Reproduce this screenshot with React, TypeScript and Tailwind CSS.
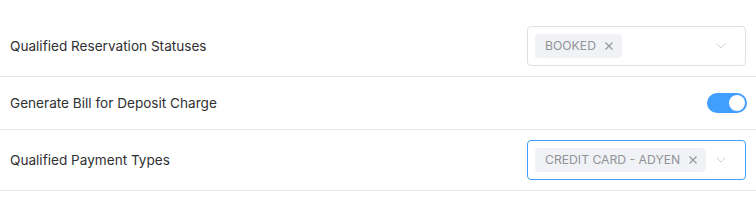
import { ChevronDown } from "lucide-react";

function Tag({ label }: { label: string }) {
  return (
    <span className="flex h-[24px] shrink-0 items-center gap-[9px] whitespace-nowrap rounded-[4px] bg-[#f0f2f5] pl-[10px] pr-[9px] text-[12.2px] text-[#909399]">
      {label}
      <svg width="8" height="8" viewBox="0 0 8 8" className="text-[#909399]">
        <path d="M0.5 0.5 L7.5 7.5 M7.5 0.5 L0.5 7.5" stroke="currentColor" strokeWidth="1.1" />
      </svg>
    </span>
  );
}

function MultiSelect({ tag, focused }: { tag: string; focused?: boolean }) {
  return (
    <div
      className={`flex h-[40px] w-[219px] items-center justify-between rounded-[4px] border bg-white pl-[7px] pr-[16px] ${
        focused ? "border-[#409eff]" : "border-[#dcdfe6]"
      }`}
    >
      <Tag label={tag} />
      <ChevronDown size={16} strokeWidth={1.2} className="shrink-0 text-[#c0c4cc]" />
    </div>
  );
}

function Toggle() {
  return (
    <div className="flex h-[20px] w-[40px] items-center justify-end rounded-full bg-[#409eff] pr-[2px]">
      <span className="h-[16px] w-[16px] rounded-full bg-white" />
    </div>
  );
}

export default function App() {
  return (
    <div
      className="w-[756px] bg-white pt-[16px] text-[13.6px] text-[#303133]"
      style={{ fontFamily: "Inter, 'Noto Sans', sans-serif" }}
    >
      <div className="flex items-center justify-between border-b border-[#e4e7ed] py-[10px] pl-[10px] pr-[10px]">
        <span>Qualified Reservation Statuses</span>
        <MultiSelect tag="BOOKED" />
      </div>
      <div className="flex items-center justify-between border-b border-[#e4e7ed] py-[16px] pl-[10px] pr-[9px]">
        <span>Generate Bill for Deposit Charge</span>
        <Toggle />
      </div>
      <div className="flex items-center justify-between border-b border-[#e4e7ed] py-[10px] pl-[10px] pr-[10px]">
        <span>Qualified Payment Types</span>
        <MultiSelect tag="CREDIT CARD - ADYEN" focused />
      </div>
    </div>
  );
}
